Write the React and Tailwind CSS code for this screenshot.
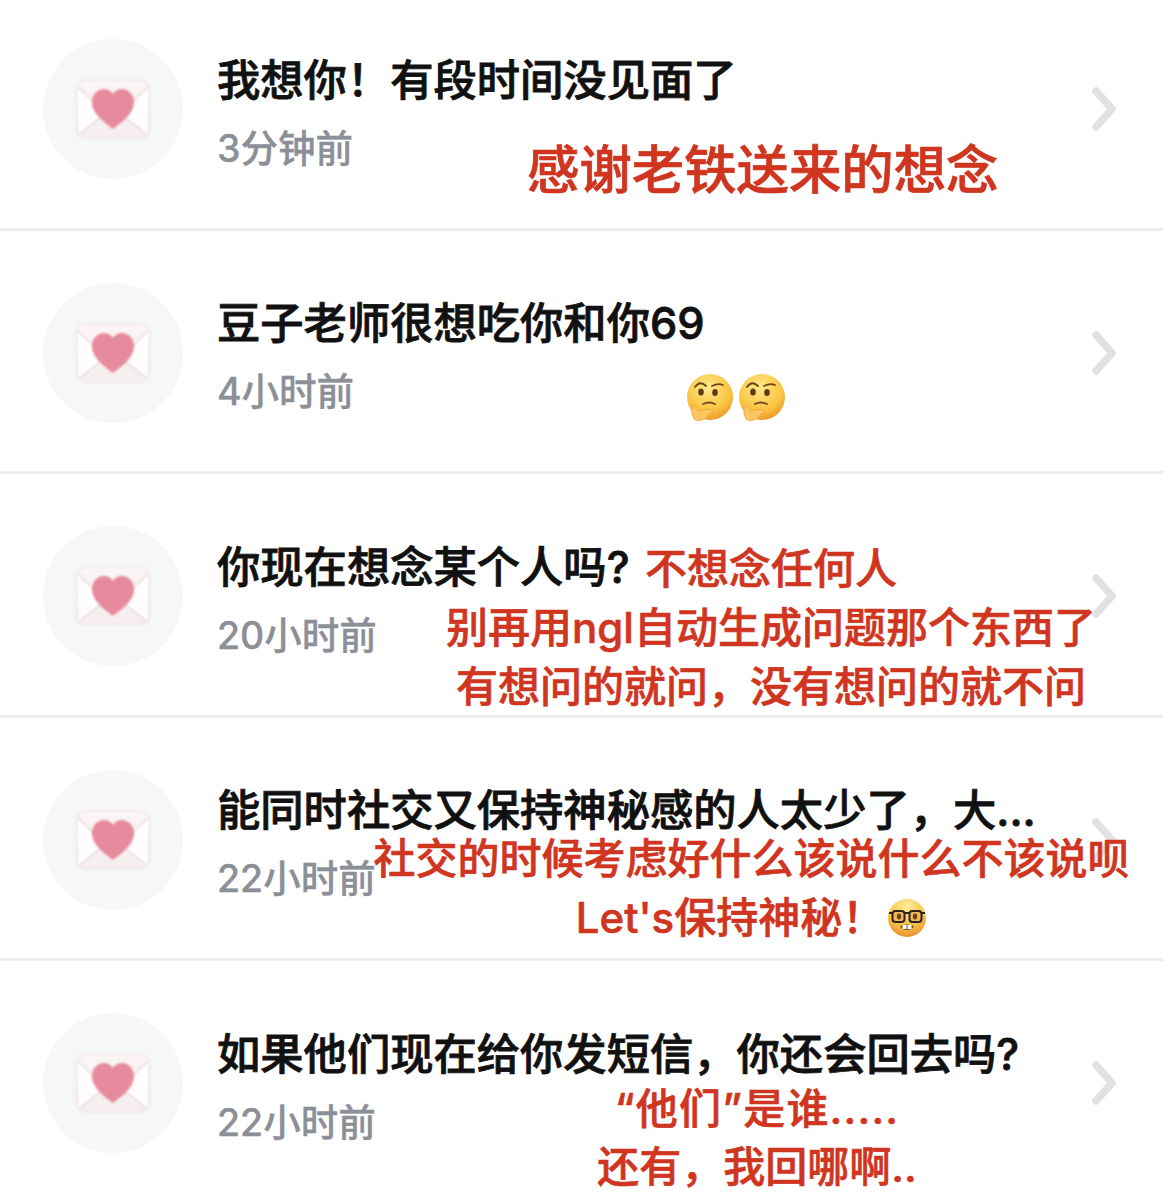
const font = { fontFamily: 'Inter, "Noto Sans CJK SC", "Liberation Sans", sans-serif' };

function Envelope({ id }) {
  return (
    <svg width="80" height="64" viewBox="0 0 80 64">
      <defs>
        <linearGradient id={`env${id}`} x1="0" y1="0" x2="0" y2="1">
          <stop offset="0" stopColor="#fbf5f5" />
          <stop offset="1" stopColor="#f5eeef" />
        </linearGradient>
        <filter id={`b${id}`} x="-10%" y="-10%" width="120%" height="120%">
          <feGaussianBlur stdDeviation="0.9" />
        </filter>
        <filter id={`s${id}`} x="-10%" y="-10%" width="120%" height="120%">
          <feGaussianBlur stdDeviation="1.2" />
        </filter>
      </defs>
      <rect x="3" y="3" width="74" height="58" rx="10" fill={`url(#env${id})`} stroke="#efe8e9" strokeWidth="1.5" filter={`url(#b${id})`} />
      <path d="M5 12 L32 36 L6 56 Z" fill="#fffdfd" />
      <path d="M75 12 L48 36 L74 56 Z" fill="#fffdfd" />
      <path d="M5 10 L32 36 M75 10 L48 36 M7 57 L32 37 M73 57 L48 37" stroke="#e8dfe1" strokeWidth="1.3" fill="none" filter={`url(#s${id})`} />
      <path
        d="M40 52 C34 47 19 38 19 25 C19 16 26 12 31 12 C35 12 38.5 14 40 17 C41.5 14 45 12 49 12 C54 12 61 16 61 25 C61 38 46 47 40 52 Z"
        fill="#e68a9d"
        filter={`url(#b${id})`}
      />
    </svg>
  );
}

function Chevron() {
  return (
    <svg width="24" height="46" viewBox="0 0 24 46" className="shrink-0">
      <path d="M4 5 L20 23 L4 41" fill="none" stroke="#e1e1e4" strokeWidth="7.5" strokeLinecap="round" strokeLinejoin="round" />
    </svg>
  );
}

function Thinking({ id }) {
  return (
    <svg width="50" height="50" viewBox="0 0 50 50">
      <defs>
        <radialGradient id={`t${id}`} cx="0.45" cy="0.3" r="0.72">
          <stop offset="0" stopColor="#ffe98a" />
          <stop offset="0.7" stopColor="#f9c33f" />
          <stop offset="1" stopColor="#ea962a" />
        </radialGradient>
      </defs>
      <circle cx="25" cy="23" r="23" fill={`url(#t${id})`} />
      <path d="M10 13 Q15 6 21 12" stroke="#6e4418" strokeWidth="1.8" fill="none" strokeLinecap="round" />
      <path d="M27 12 Q33 9 38 11" stroke="#6e4418" strokeWidth="1.8" fill="none" strokeLinecap="round" />
      <ellipse cx="16" cy="18" rx="2.8" ry="3.6" fill="#5f3a14" />
      <ellipse cx="30" cy="18.5" rx="2.8" ry="3.6" fill="#5f3a14" />
      <path d="M18 30 Q24 27 30 30" stroke="#7a4a1c" strokeWidth="1.8" fill="none" strokeLinecap="round" />
      <path d="M7 34 Q8 29 11 32 L14 37 Q21 34 28 36 Q29 39 24 40 L22 43 Q14 49 9 45 Q6 40 7 34 Z" fill="#fcc663" stroke="#eda436" strokeWidth="0.8" />
    </svg>
  );
}

function Nerd() {
  return (
    <svg width="40" height="40" viewBox="0 0 40 40">
      <defs>
        <radialGradient id="nerd" cx="0.5" cy="0.2" r="0.85">
          <stop offset="0" stopColor="#ffef9c" />
          <stop offset="0.6" stopColor="#f8bf45" />
          <stop offset="1" stopColor="#e58a2d" />
        </radialGradient>
      </defs>
      <circle cx="20" cy="20" r="19" fill="url(#nerd)" />
      <rect x="5.5" y="13" width="12" height="11" rx="3" fill="#f2b95c" stroke="#2b2320" strokeWidth="2" />
      <rect x="22.5" y="13" width="12" height="11" rx="3" fill="#f2b95c" stroke="#2b2320" strokeWidth="2" />
      <path d="M17 15 H23 M2 15 H6 M34 15 H38" stroke="#2b2320" strokeWidth="2" />
      <ellipse cx="12" cy="18.5" rx="2.2" ry="3" fill="#6b4018" />
      <ellipse cx="28" cy="18.5" rx="2.2" ry="3" fill="#6b4018" />
      <path d="M13 28 Q20 25 27 28 Q25 32 20 32 Q15 32 13 28 Z" fill="#7a4a1c" />
      <rect x="15.5" y="27" width="4" height="4" fill="#fff" />
      <rect x="20.5" y="27" width="4" height="4" fill="#fff" />
    </svg>
  );
}

const rows = [
  ["我想你！有段时间没见面了", "3分钟前"],
  ["豆子老师很想吃你和你69", "4小时前"],
  ["你现在想念某个人吗?", "20小时前"],
  ["能同时社交又保持神秘感的人太少了，大...", "22小时前"],
  ["如果他们现在给你发短信，你还会回去吗?", "22小时前"],
];

const note = "whitespace-nowrap font-medium leading-none text-[#d0351f] text-[42px] [-webkit-text-stroke:0.6px_#d0351f]";

export default function App() {
  return (
    <div className="relative h-[1200px] w-[1163px] overflow-hidden bg-white" style={font}>
      <div className="-mt-[13px] flex flex-col">
        {rows.map(([title, time], i) => (
          <div
            key={i}
            className="flex h-[243.5px] shrink-0 items-center border-b-[3px] border-[#ececee] pl-[43px] pr-[47px] pt-[4px]"
          >
            <div className="flex h-[140px] w-[140px] shrink-0 items-center justify-center rounded-full bg-[#f6f7f9]">
              <Envelope id={i} />
            </div>
            <div className="ml-[34px] flex min-w-0 flex-1 flex-col pt-[5px]">
              <div className="whitespace-nowrap text-[43.3px] font-medium leading-[60px] text-[#111111] [-webkit-text-stroke:0.8px_#111111]">{title}</div>
              <div className="mt-[14px] whitespace-nowrap text-[37.5px] font-medium leading-[50px] text-[#8c8f98] [-webkit-text-stroke:0.3px_#8c8f98]">{time}</div>
            </div>
            <Chevron />
          </div>
        ))}
      </div>

      <div className="absolute left-[527px] top-[144px] whitespace-nowrap text-[52.4px] font-medium leading-none text-[#d0351f] [-webkit-text-stroke:0.7px_#d0351f]">
        感谢老铁送来的想念
      </div>
      <div className="absolute left-[685px] top-[374px] flex gap-[2px]">
        <Thinking id="a" />
        <Thinking id="b" />
      </div>
      <div className="absolute left-[445px] top-[548px] flex w-[652px] flex-col items-center gap-[17px]">
        <div className={note}>不想念任何人</div>
        <div className={note}>别再用ngl自动生成问题那个东西了</div>
        <div className={note}>有想问的就问，没有想问的就不问</div>
      </div>
      <div className="absolute left-[373px] top-[838px] flex w-[757px] flex-col items-center gap-[17px]">
        <div className={note}>社交的时候考虑好什么该说什么不该说呗</div>
        <div className="flex items-center gap-[3px]">
          <div className={note}>Let's保持神秘！</div>
          <Nerd />
        </div>
      </div>
      <div className="absolute left-[599px] top-[1088px] flex w-[316px] flex-col items-center gap-[16px]">
        <div className={`${note} tracking-[1.2px]`}>“他们”是谁.....</div>
        <div className={note}>还有，我回哪啊..</div>
      </div>
    </div>
  );
}
